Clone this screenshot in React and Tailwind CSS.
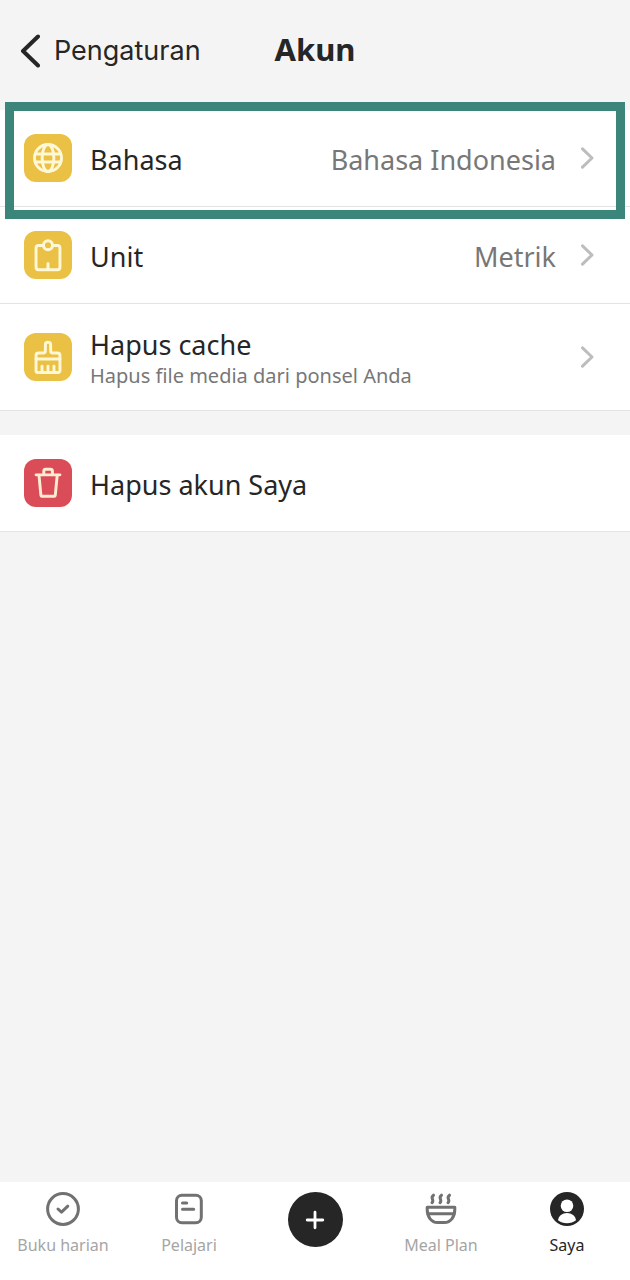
import React from 'react';

const GlobeIcon = () => (
  <svg viewBox="0 0 49 49" className="size-full" fill="none" stroke="#fff8d6" strokeWidth="3">
    <circle cx="24.5" cy="24.5" r="13.8" />
    <ellipse cx="24.5" cy="24.5" rx="6" ry="13.8" />
    <path d="M11.5 20.5h26M11.5 28.5h26" />
  </svg>
);

const ScaleIcon = () => (
  <svg
    viewBox="0 0 49 49"
    className="size-full"
    fill="none"
    stroke="#fff8d6"
    strokeWidth="3"
    strokeLinecap="round"
    strokeLinejoin="round"
  >
    <circle cx="24.5" cy="14.6" r="4.6" />
    <path d="M19.9 14.8h-5.1a2.5 2.5 0 0 0-2.5 2.5v19.8a2.5 2.5 0 0 0 2.5 2.5h19.4a2.5 2.5 0 0 0 2.5-2.5V17.3a2.5 2.5 0 0 0-2.5-2.5h-5.1" />
    <path d="M24.5 33.5v5.5" />
  </svg>
);

const BrushIcon = () => (
  <svg
    viewBox="0 0 49 49"
    className="size-full"
    fill="none"
    stroke="#fff8d6"
    strokeWidth="3"
    strokeLinecap="round"
    strokeLinejoin="round"
  >
    <path d="M12.3 26.5v-3.5a2.5 2.5 0 0 1 2.5-2.5h5a2 2 0 0 0 2-2v-6.3a2.7 2.7 0 0 1 5.4 0v6.3a2 2 0 0 0 2 2h5a2.5 2.5 0 0 1 2.5 2.5v3.5" />
    <path d="M12.3 26.5h24.4v12a1.8 1.8 0 0 1-1.8 1.8H14.1a1.8 1.8 0 0 1-1.8-1.8z" />
    <path d="M18.4 33.8v6M24.5 33.8v6M30.6 33.8v6" />
  </svg>
);

const TrashIcon = () => (
  <svg
    viewBox="0 0 49 49"
    className="size-full"
    fill="none"
    stroke="#fdebd2"
    strokeWidth="3"
    strokeLinecap="round"
    strokeLinejoin="round"
  >
    <path d="M12.3 16.2h24.4" />
    <path d="M20.2 16v-3.5a2 2 0 0 1 2-2h4.8a2 2 0 0 1 2 2v3.5" />
    <path d="M15.3 16.5l1.9 20a1.8 1.8 0 0 0 1.8 1.6h11.2a1.8 1.8 0 0 0 1.8-1.6l1.9-20" />
  </svg>
);

const DiaryIcon = () => (
  <svg
    viewBox="0 0 34 34"
    className="size-[34px]"
    fill="none"
    stroke="#717171"
    strokeWidth="3"
    strokeLinecap="round"
    strokeLinejoin="round"
  >
    <circle cx="17" cy="17" r="15.4" />
    <path d="M12 17l3.5 3.2 6.3-6" />
  </svg>
);

const LearnIcon = () => (
  <svg
    viewBox="0 0 34 34"
    className="size-[34px]"
    fill="none"
    stroke="#717171"
    strokeWidth="3"
    strokeLinecap="round"
  >
    <rect x="4.5" y="3.3" width="24.8" height="27.4" rx="5.5" />
    <path d="M10.5 11h4.2M10.5 17.2h11.2" />
  </svg>
);

const MealIcon = () => (
  <svg
    viewBox="0 0 34 34"
    className="size-[34px]"
    fill="none"
    stroke="#717171"
    strokeWidth="3"
    strokeLinecap="round"
    strokeLinejoin="round"
  >
    <path d="M3.2 15.2h27.6v2.3c0 7.5-4.3 13-10.3 13h-7c-6 0-10.3-5.5-10.3-13z" />
    <path d="M4 21.8h26" />
    <path d="M9.5 3.2c-4 3 1.5 4.3-1.5 7.5M17.5 3.2c-4 3 1.5 4.3-1.5 7.5M25.5 3.2c-4 3 1.5 4.3-1.5 7.5" />
  </svg>
);

const ProfileIcon = () => (
  <svg viewBox="0 0 34 34" className="size-[34px]">
    <circle cx="17" cy="17" r="17" fill="#262626" />
    <circle cx="17" cy="13.8" r="6.3" fill="#fff" />
    <path d="M8 28.3c.6-4.3 4.3-7.3 9-7.3s8.4 3 9 7.3c-2.4 2-5.6 3-9 3s-6.6-1-9-3z" fill="#fff" />
  </svg>
);

const Chevron = () => (
  <svg
    viewBox="0 0 14 24"
    className="mr-3 ml-6 h-6 w-3.5 shrink-0"
    fill="none"
    stroke="#bdbdbd"
    strokeWidth="3"
    strokeLinecap="round"
    strokeLinejoin="round"
  >
    <path d="M2.5 2.8l9.5 9.2-9.5 9.2" />
  </svg>
);

const SettingRow = ({ icon, color, title, subtitle, value, chevron, highlighted }) => (
  <li className="relative border-b border-[#e4e4e4] bg-white">
    <button type="button" className={`flex w-full items-center px-6 text-left ${subtitle ? 'py-[19px]' : 'py-6'}`}>
      <span className={`size-12 shrink-0 overflow-hidden rounded-xl ${color}`}>{icon}</span>
      <span className={`ml-[18px] flex-1 ${subtitle ? 'pt-1.5' : 'pt-[3px]'}`}>
        <span className="block text-[27px] leading-8">{title}</span>
        {subtitle && <span className="block text-xl leading-[30px] text-[#777]">{subtitle}</span>}
      </span>
      {value && <span className="pt-[3px] text-[27px] leading-8 text-[#777]">{value}</span>}
      {chevron && <Chevron />}
    </button>
    {highlighted && (
      <span className="pointer-events-none absolute inset-x-[5px] -top-2 -bottom-[13px] z-10 border-[9px] border-[#3c857b]" />
    )}
  </li>
);

const accountSettings = [
  {
    title: 'Bahasa',
    value: 'Bahasa Indonesia',
    icon: <GlobeIcon />,
    highlighted: true,
  },
  {
    title: 'Unit',
    value: 'Metrik',
    icon: <ScaleIcon />,
  },
  {
    title: 'Hapus cache',
    subtitle: 'Hapus file media dari ponsel Anda',
    icon: <BrushIcon />,
  },
];

const NavItem = ({ icon, label, active }) => (
  <a
    href="#"
    aria-current={active ? 'page' : undefined}
    className={`flex flex-col items-center gap-[7px] text-base leading-6 ${active ? 'text-[#262626]' : 'text-[#a5a5a5]'}`}
  >
    {icon}
    {label}
  </a>
);

const App = () => {
  return (
    <div className="flex min-h-screen flex-col bg-[#f4f4f4] font-['Noto_Sans',sans-serif] text-[#262626]">
      <header className="grid h-[110px] grid-cols-[1fr_auto_1fr] items-center px-5 pb-2">
        <a href="#" className="flex items-center gap-3.5 font-['Inter',sans-serif] text-[27px] leading-8">
          <svg
            viewBox="0 0 20 34"
            className="h-[34px] w-5"
            fill="none"
            stroke="currentColor"
            strokeWidth="4"
            strokeLinecap="round"
            strokeLinejoin="round"
          >
            <path d="M18 2.5L3 17l15 14.5" />
          </svg>
          Pengaturan
        </a>
        <h1 className="pb-1 text-[31px] leading-10 font-bold">Akun</h1>
      </header>

      <main className="flex-1">
        <ul>
          {accountSettings.map((item) => (
            <SettingRow key={item.title} color="bg-[#eac045]" chevron {...item} />
          ))}
        </ul>
        <ul className="mt-6">
          <SettingRow color="bg-[#da4c57]" title="Hapus akun Saya" icon={<TrashIcon />} />
        </ul>
      </main>

      <nav className="grid grid-cols-5 bg-white pt-2.5 pb-[23px]">
        <NavItem icon={<DiaryIcon />} label="Buku harian" />
        <NavItem icon={<LearnIcon />} label="Pelajari" />
        <button
          type="button"
          aria-label="Tambah"
          className="flex size-[55px] items-center justify-center justify-self-center rounded-full bg-[#262626]"
        >
          <svg viewBox="0 0 20 20" className="size-5" stroke="#fff" strokeWidth="2.8" strokeLinecap="round">
            <path d="M10 2.2v15.6M2.2 10h15.6" />
          </svg>
        </button>
        <NavItem icon={<MealIcon />} label="Meal Plan" />
        <NavItem icon={<ProfileIcon />} label="Saya" active />
      </nav>
    </div>
  );
};

export default App;
